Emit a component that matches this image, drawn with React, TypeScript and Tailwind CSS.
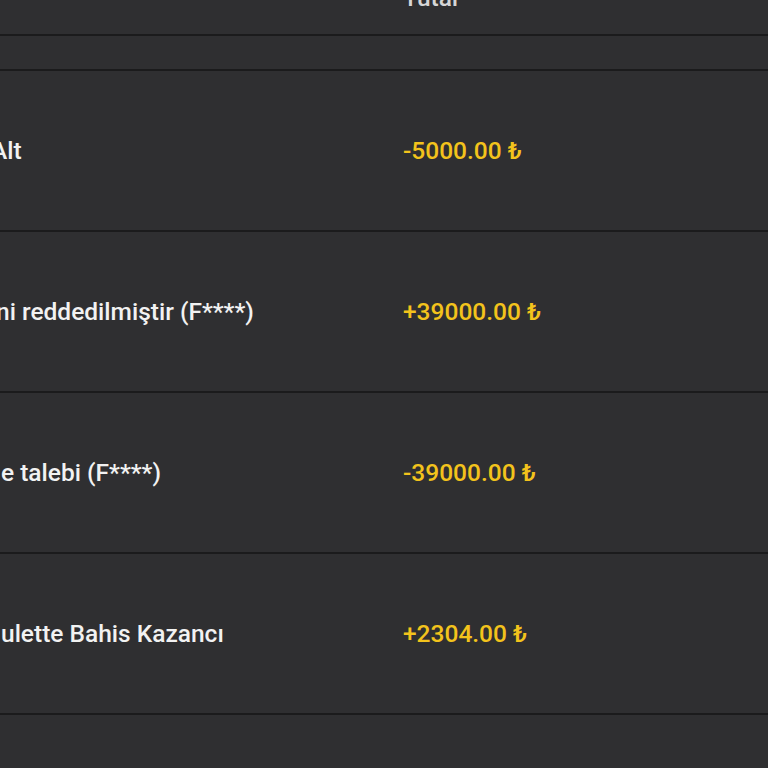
const rows = [
  { desc: "Alt", amount: "-5000.00 ₺", shift: "-ml-[9px]" },
  { desc: "ni reddedilmiştir (F****)", amount: "+39000.00 ₺", shift: "-ml-[4px]" },
  { desc: "e talebi (F****)", amount: "-39000.00 ₺", shift: "ml-[1px]" },
  { desc: "ulette Bahis Kazancı", amount: "+2304.00 ₺", shift: "ml-[1px]" },
];

export default function App() {
  return (
    <div
      className="h-[768px] w-[768px] overflow-hidden bg-[#2f2f31] text-[24.5px] font-medium"
      style={{ fontFamily: "Roboto, 'Noto Sans', sans-serif" }}
    >
      <div className="flex h-[36px] items-start border-b-2 border-[#1b1b1c]">
        <div className="w-[403px]" />
        <div className="-mt-[20px] text-[#d6d6d6]">Tutar</div>
      </div>
      <div className="h-[35px] border-b-2 border-[#1b1b1c]" />
      {rows.map((r) => (
        <div
          key={r.amount}
          className="flex h-[161px] items-center border-b-2 border-[#1b1b1c] pt-[2px]"
        >
          <div className="w-[403px] overflow-hidden whitespace-nowrap">
            <span className={`block text-[#f2f2f2] ${r.shift}`}>{r.desc}</span>
          </div>
          <div className="text-[#f3c31c]">{r.amount}</div>
        </div>
      ))}
    </div>
  );
}
